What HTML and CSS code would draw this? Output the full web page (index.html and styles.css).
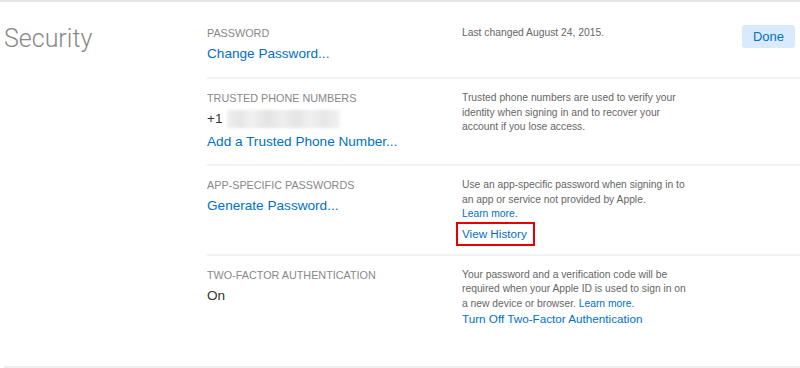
FILE: index.html
```html
<!DOCTYPE html>
<html lang="en">
<head>
<meta charset="utf-8">
<title>Security</title>
<link rel="stylesheet" href="styles.css">
</head>
<body>
<div class="page">
  <section class="section">
    <h2 class="section-title">Security</h2>
    <div class="rows">
      <div class="row row-first">
        <div class="col-main">
          <div class="label">PASSWORD</div>
          <a class="link" href="#">Change Password...</a>
        </div>
        <div class="col-info">
          <p class="info">Last changed August 24, 2015.</p>
        </div>
        <div class="col-action">
          <button class="btn-done" type="button">Done</button>
        </div>
      </div>
      <div class="row">
        <div class="col-main">
          <div class="label">TRUSTED PHONE NUMBERS</div>
          <div class="phone"><span class="value">+1</span><span class="blurred"></span></div>
          <a class="link" href="#">Add a Trusted Phone Number...</a>
        </div>
        <div class="col-info">
          <p class="info">Trusted phone numbers are used to verify your identity when signing in and to recover your account if you lose access.</p>
        </div>
        <div class="col-action"></div>
      </div>
      <div class="row row-app">
        <div class="col-main">
          <div class="label">APP-SPECIFIC PASSWORDS</div>
          <a class="link" href="#">Generate Password...</a>
        </div>
        <div class="col-info">
          <p class="info">Use an app-specific password when signing in to an app or service not provided by Apple.<br><a class="small-link" href="#">Learn more.</a></p>
          <a class="history" href="#">View History</a>
        </div>
        <div class="col-action"></div>
      </div>
      <div class="row row-last">
        <div class="col-main">
          <div class="label">TWO-FACTOR AUTHENTICATION</div>
          <div class="value">On</div>
        </div>
        <div class="col-info">
          <p class="info">Your password and a verification code will be required when your Apple ID is used to sign in on a new device or browser. <a class="small-link" href="#">Learn more.</a></p>
          <a class="info-link" href="#">Turn Off Two-Factor Authentication</a>
        </div>
        <div class="col-action"></div>
      </div>
    </div>
  </section>
</div>
</body>
</html>
```

FILE: styles.css
```css
* { box-sizing: border-box; }
html, body { margin: 0; padding: 0; background: #fff; }
body {
  font-family: "Liberation Sans", Arial, sans-serif;
  color: #333;
  width: 800px;
  height: 368px;
  overflow: hidden;
}
a { text-decoration: none; }

.page {
  border-top: 2px solid #e6e6e6;
}

.section {
  margin-left: 4px;
  padding-top: 10px;
  display: flex;
  border-bottom: 2px solid #eeeeee;
}

.section-title {
  width: 203px;
  flex: none;
  margin: 0;
  padding-top: 11px;
  font-family: "Roboto", "Liberation Sans", sans-serif;
  font-weight: 300;
  font-size: 25px;
  line-height: 32px;
  color: #888;
}

.rows {
  flex: 1;
  display: flex;
  flex-direction: column;
}

.row {
  display: flex;
  padding: 12px 0 12px;
  border-top: 2px solid #f2f2f2;
}
.row-first { border-top: none; padding-top: 14px; padding-bottom: 13px; }
.row-app { padding-bottom: 8px; }
.row-last { padding-bottom: 39px; }

.col-main {
  width: 255px;
  flex: none;
  display: flex;
  flex-direction: column;
  align-items: flex-start;
}
.col-info {
  width: 226px;
  flex: none;
  display: flex;
  flex-direction: column;
  align-items: flex-start;
}
.col-action {
  flex: 1;
  display: flex;
  justify-content: flex-end;
  padding-right: 5px;
}

.label {
  font-size: 10.8px;
  line-height: 15px;
  color: #888;
}
.link {
  margin-top: 3px;
  font-size: 13.6px;
  line-height: 20px;
  color: #0070c9;
}
.value {
  font-size: 13.6px;
  line-height: 20px;
  color: #333;
}
.col-main > .value { margin-top: 3px; }
.phone {
  margin-top: 3px;
  display: flex;
  align-items: center;
  gap: 4px;
}
.blurred {
  width: 113px;
  height: 18px;
  background: linear-gradient(90deg, #efefef 0%, #e6e6e6 12%, #f1f1f1 22%, #e3e3e3 36%, #eeeeee 48%, #e4e4e4 62%, #f0f0f0 74%, #e6e6e6 86%, #f2f2f2 100%);
  filter: blur(1.5px);
}

.info {
  margin: 0;
  font-size: 10.3px;
  line-height: 14.5px;
  color: #666;
}
.small-link { color: #0070c9; }
.info-link {
  font-size: 11.7px;
  line-height: 16px;
  color: #0070c9;
}
.history {
  margin-left: -6px;
  padding: 2px 6px 3px 4px;
  border: 2px solid #e60000;
  font-size: 11.7px;
  line-height: 15px;
  color: #0070c9;
}

.btn-done {
  margin-top: -1px;
  width: 53px;
  height: 23px;
  border: none;
  border-radius: 3px;
  background: #d9eafc;
  color: #0070c9;
  font-family: "Liberation Sans", Arial, sans-serif;
  font-size: 13px;
  padding: 0;
}
```
